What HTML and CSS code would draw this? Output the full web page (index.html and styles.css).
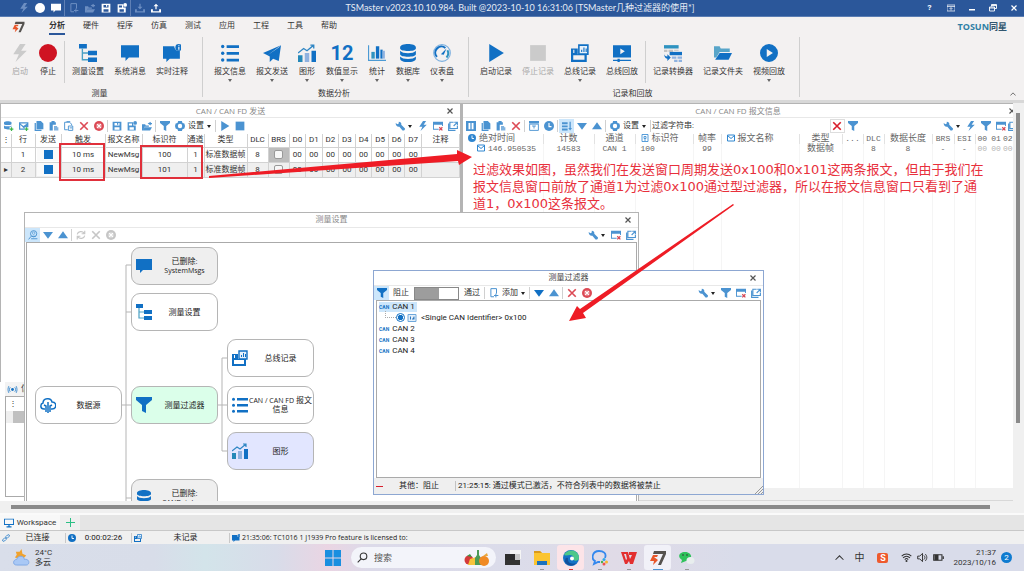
FILE: index.html
```html
<!DOCTYPE html>
<html lang="zh-CN">
<head>
  <meta charset="UTF-8">
  <meta name="viewport" content="width=device-width, initial-scale=1.0">
  <title>TSMaster</title>
  <link rel="stylesheet" href="styles.css">
</head>
<body>
  <!-- icon sprite -->
  <svg class="sprite" xmlns="http://www.w3.org/2000/svg">
    <symbol id="bolt" viewBox="0 0 16 16"><path d="M8 0L2 9h5l-3 7 10-10H9l4-6z"/></symbol>
    <symbol id="dot" viewBox="0 0 16 16"><circle cx="8" cy="8" r="8"/></symbol>
    <symbol id="chat" viewBox="0 0 16 16"><path d="M0 1h16v11H7l-3 3v-3H0z"/></symbol>
    <symbol id="chat-info" viewBox="0 0 16 16"><path d="M0 2h10a4 4 0 0 0 5 4v7H6l-3 3v-3H0z"/><circle cx="14" cy="3" r="3"/><path d="M13.600 2.600h1v2.400h-1zM13.600 1h1v1h-1z" fill="#fff"/></symbol>
    <symbol id="doc-add" viewBox="0 0 16 16"><path d="M3 1h9v8M3 1v13h5M11 9v6M8 12h7" fill="none" stroke="currentColor" stroke-width="1.600"/></symbol>
    <symbol id="folder-up" viewBox="0 0 16 16"><path d="M0 5h5l1 2h5v2H4l-2 6H0zM4 10h12l-3 5H2zM9 4l5-3v2h2v2h-2v2z"/></symbol>
    <symbol id="save" viewBox="0 0 16 16"><path fill-rule="evenodd" d="M1 1h14v14H1zM4 3v4h8V3zM4 10v4h8v-4zM8 3h2v3H8z"/></symbol>
    <symbol id="save-as" viewBox="0 0 16 16"><path fill-rule="evenodd" d="M1 2h9v5h4v8H1zM3 4v3h5V4zM4 10v4h7v-4z"/><circle cx="13" cy="3" r="3"/></symbol>
    <symbol id="download" viewBox="0 0 16 16"><path d="M7 1h2v5h3L8 10 4 6h3zM0 10h3v3h10v-3h3v5H0z"/></symbol>
    <symbol id="upload" viewBox="0 0 16 16"><path d="M7 10h2V5h3L8 1 4 5h3zM0 10h3v3h10v-3h3v5H0z"/></symbol>
    <symbol id="tree" viewBox="0 0 16 16"><path d="M0 0h7v4H0zM8 6h8v4H8zM8 12h8v4H8z"/><path d="M3 4v10h5M3 8h5" fill="none" stroke="#49a0c4" stroke-width="1.200"/></symbol>
    <symbol id="list" viewBox="0 0 16 16"><path d="M5 1h11v2.500H5zM5 7h11v2.500H5zM5 13h11v2.500H5z"/><circle cx="1.500" cy="2.200" r="1.500"/><circle cx="1.500" cy="8.200" r="1.500"/><circle cx="1.500" cy="14.200" r="1.500"/></symbol>
    <symbol id="plane" viewBox="0 0 16 16"><path d="M16 1L0 8l4 2zM16 1L6 11v5l3-3 5 2zM14 3L4 10l2 1z"/></symbol>
    <symbol id="chart" viewBox="0 0 16 16"><path d="M0 10h4v6H0z" fill="#2488b8"/><path d="M6 8h4v8H6z" fill="#8fb2e0"/><path d="M12 6h4v10h-4z"/><path d="M0 8l5-4 3 2 6-5M11 1h3v3" fill="none" stroke="#2f86c4" stroke-width="1.200"/></symbol>
    <symbol id="bars" viewBox="0 0 16 16"><path d="M0 1h1v13h15v1H0z" fill="#4b9ad4"/><path d="M3 7h3v6H3z" fill="#2f93c0"/><path d="M7 2h3v11H7z"/><path d="M11 5h2v8h-2z"/><path d="M13 6h2v7h-2z" fill="#8fb2e0"/></symbol>
    <symbol id="db" viewBox="0 0 16 16"><path d="M1 3c0-4 14-4 14 0v1c0 3-14 3-14 0zM1 6c2 3 12 3 14 0v3c0 3-14 3-14 0zM1 11c2 3 12 3 14 0v2c0 4-14 4-14 0z"/></symbol>
    <symbol id="gauge" viewBox="0 0 16 16"><circle cx="8" cy="8" r="7.400" fill="none" stroke="#7db0df"/><path d="M3.500 11.500A5.500 5.500 0 0 1 11 3.500" fill="none" stroke="currentColor" stroke-width="1.800"/><path d="M12.800 5.600A5.500 5.500 0 0 1 12 12" fill="none" stroke="#2f93c0" stroke-width="1.800"/><path d="M12 4L9.500 9.500 7 9z"/></symbol>
    <symbol id="play" viewBox="0 0 16 16"><path d="M2 0l13 8-13 8z"/></symbol>
    <symbol id="stop" viewBox="0 0 16 16"><path d="M1 1h14v14H1z"/></symbol>
    <symbol id="bus-log" viewBox="0 0 16 16"><path fill-rule="evenodd" d="M0 4h6v5h8v7H0zM2 10v4h10v-4zM2 5v3h1V5z"/><path d="M7 1h8v8H7z" fill="#e8f2fb" stroke="currentColor" stroke-width="1.400"/><path d="M9 5h1v2H9zM11 3h1v4h-1zM13 4h1v3h-1z"/></symbol>
    <symbol id="screen" viewBox="0 0 16 16"><path fill-rule="evenodd" d="M0 1h16v11H0zM6.500 4v5l4-2.500z"/><path d="M0 14h16v1H0zM4 13h2v3H4z"/></symbol>
    <symbol id="convert" viewBox="0 0 16 16"><path d="M0 1h13v3H0z" fill="#2f93c0"/><path d="M0 5h3v2H0zM4 5h4v2H4zM9 5h4v1H9z" fill="#c3c3c3"/><path d="M5 7h11v3H5z"/><path d="M7 11h4v2H7zM12 11h4v2h-4zM9 14h3v2H9zM13 14h3v2h-3z" fill="#8fb2e0"/><path d="M0 8c0 2 1 3 3 3V9l3 3-3 3v-2C1 13 0 11 0 8z"/></symbol>
    <symbol id="folder" viewBox="0 0 16 16"><path d="M0 2h5l1 2h8v3H5l-3 5H0z" fill="#58a5c9"/><path d="M5 8h11l-3 6H1z"/></symbol>
    <symbol id="play-circle" viewBox="0 0 16 16"><path fill-rule="evenodd" d="M8 0a8 8 0 1 1 0 16A8 8 0 0 1 8 0zM6 4.500v7l5.500-3.500z"/></symbol>
    <symbol id="db-add" viewBox="0 0 16 16"><path d="M0 2c3-2 9-2 12 0v3c-3 2-9 2-12 0zM0 7c3 2 9 2 12 0v2H9v4c-3 1-7 0-9-1z"/><path d="M11 10h2v2h2v2h-2v2h-2v-2H9v-2h2z" fill="#3db54a"/></symbol>
    <symbol id="mail-add" viewBox="0 0 16 16"><path fill-rule="evenodd" d="M0 2h15v8H9v4H0zM2 4l5 4 6-4zM2 6v6h6z"/><path d="M11 10h2v2h2v2h-2v2h-2v-2H9v-2h2z" fill="#3db54a"/></symbol>
    <symbol id="copy" viewBox="0 0 16 16"><path d="M4 0h7l4 4v9H4zM1 3h2v11h9v2H1z"/></symbol>
    <symbol id="paste" viewBox="0 0 16 16"><path d="M1 2h3V0h5v2h2v4H6v9H1z"/><path d="M8 8h5v2h2v5H8z" opacity=".7"/></symbol>
    <symbol id="doc-lines" viewBox="0 0 16 16"><path d="M1 2h8l3 3v2M1 2v12h5M4 1h6M7 8h7v7H7zM9 11h4" fill="none" stroke="currentColor" stroke-width="1.500"/></symbol>
    <symbol id="cross" viewBox="0 0 16 16"><path d="M2 2l12 12M14 2L2 14" fill="none" stroke="currentColor" stroke-width="2.600"/></symbol>
    <symbol id="cross-circle" viewBox="0 0 16 16"><circle cx="8" cy="8" r="8"/><circle cx="8" cy="8" r="4.500" fill="#fff" opacity=".35"/><path d="M5 5l6 6M11 5l-6 6" stroke="#fff" stroke-width="2"/></symbol>
    <symbol id="funnel" viewBox="0 0 16 16"><path d="M0 0h16v3L10 8v8l-4-2V8L0 3z"/></symbol>
    <symbol id="gear" viewBox="0 0 16 16"><path fill-rule="evenodd" d="M5 0h6l1 3 3 1 1 4-1 4-3 1-1 3H5l-1-3-3-1-1-4 1-4 3-1zM8 4.500a3.500 3.500 0 1 0 0 7 3.500 3.500 0 0 0 0-7z"/></symbol>
    <symbol id="wrench" viewBox="0 0 16 16"><path d="M1 3l3 2 2-1V1c3 0 5 3 4 5l6 6c0 3-2 4-4 3L7 9C4 10 1 7 1 3z"/></symbol>
    <symbol id="window-x" viewBox="0 0 16 16"><path fill-rule="evenodd" d="M0 1h16v13H0zM1.500 6v6.500h13V6z"/><path d="M9 8h7v8H9z" fill="#fff"/><path d="M10 10l5 5M15 10l-5 5" stroke="#d64553" stroke-width="2"/></symbol>
    <symbol id="pop-out" viewBox="0 0 16 16"><path d="M9 2H3v10h12V8M1 4v11h11M9 8l5-5M10 2h5v5" fill="none" stroke="currentColor" stroke-width="1.800"/></symbol>
    <symbol id="pause" viewBox="0 0 16 16"><path fill-rule="evenodd" d="M0 0h16v16H0zM4 3v10h3V3zM9 3v10h3V3z"/></symbol>
    <symbol id="panel" viewBox="0 0 16 16"><path d="M0 0h16v4H0z"/><path d="M1 5h14v10H1zM5 8h6M8 8v4" fill="none" stroke="currentColor" stroke-width="1.500"/></symbol>
    <symbol id="clock" viewBox="0 0 16 16"><circle cx="8" cy="8" r="8"/><path d="M8 3v6h4" fill="none" stroke="#fff" stroke-width="1.800"/></symbol>
    <symbol id="sort" viewBox="0 0 16 16"><path d="M0 2h9v3H0zM0 7h9v3H0zM0 12h9v3H0zM12 1h2v10h2l-3 4-3-4h2z"/></symbol>
    <symbol id="down" viewBox="0 0 16 16"><path d="M0 3h16L8 14z"/></symbol>
    <symbol id="up" viewBox="0 0 16 16"><path d="M0 13h16L8 2z"/></symbol>
    <symbol id="mail" viewBox="0 0 16 16"><path d="M1 2h14v12H1zM1 3l7 6 7-6" fill="none" stroke="currentColor" stroke-width="2"/></symbol>
    <symbol id="tag" viewBox="0 0 16 16"><path d="M2 1h12v14H2zM6 5h4v4H6zM6 12h4" fill="none" stroke="currentColor" stroke-width="1.600"/></symbol>
    <symbol id="refresh" viewBox="0 0 16 16"><path d="M2 7c1-5 8-6 11-2M14 1v5H9M14 9c-1 5-8 6-11 2M2 15v-5h5" fill="none" stroke="currentColor" stroke-width="1.800"/></symbol>
    <symbol id="zoom-fit" viewBox="0 0 16 16"><circle cx="9" cy="6" r="5" fill="none" stroke="currentColor" stroke-width="1.500"/><circle cx="9" cy="5" r="2" fill="none" stroke="currentColor"/><path d="M5 10l-4 5M6 10h6M5 14h10" stroke="currentColor" stroke-width="1.500"/></symbol>
    <symbol id="cloud" viewBox="0 0 16 16"><path d="M5 12H4C0 12 0 7 3 6c0-5 8-6 9-1 5 0 5 7 0 7h-1M8 5v11M6 15V9L4 8M10 15V9l2-1" fill="none" stroke="currentColor" stroke-width="1.500"/></symbol>
    <symbol id="signal" viewBox="0 0 16 16"><circle cx="8" cy="8" r="2.500"/><path d="M4 4c-2 2-2 6 0 8M12 4c2 2 2 6 0 8M1.500 2c-2 4-2 8 0 12M14.500 2c2 4 2 8 0 12" fill="none" stroke="currentColor" stroke-width="1.300"/></symbol>
    <symbol id="monitor" viewBox="0 0 16 16"><path fill-rule="evenodd" d="M0 1h16v10H0zM1.500 2.500v7h13v-7zM7 11h2v2h3v2H4v-2h3z"/></symbol>
    <symbol id="link" viewBox="0 0 16 16"><path d="M8 5l3-3c3-2 5 1 3 3l-4 4c-1 1-3 1-3-1M8 11l-3 3c-3 2-5-1-3-3l4-4c1-1 3-1 3 1" fill="none" stroke="currentColor" stroke-width="1.600"/></symbol>
    <symbol id="close" viewBox="0 0 16 16"><path d="M3 3l10 10M13 3L3 13" fill="none" stroke="currentColor" stroke-width="2.400"/></symbol>
    <symbol id="restore" viewBox="0 0 16 16"><path d="M5 5V1h10v8h-4M1 6h10v8H1zM1 8h10M5 3h10" fill="none" stroke="currentColor" stroke-width="1.800"/></symbol>
    <symbol id="minimize" viewBox="0 0 16 16"><path d="M2 10h12v3H2z"/></symbol>
    <symbol id="layout" viewBox="0 0 16 16"><path d="M0 2h16v12H0zM0 5h16M5 10l3-3 3 3M8 8v5" fill="none" stroke="currentColor" stroke-width="1.400"/></symbol>
    <symbol id="chevron" viewBox="0 0 16 16"><path d="M1 12l7-7 7 7" fill="none" stroke="currentColor" stroke-width="1.800"/></symbol>
    <symbol id="app" viewBox="0 0 16 16"><path d="M4 1h12v3l-5 11H8l5-11H3z" fill="#55524f"/><path d="M3 5h5L7 7H4l4 3-5 5 1-4H0z" fill="#e8562a"/></symbol>
    <symbol id="id-tag" viewBox="0 0 16 16"><path d="M0 1h16v14H0z" fill="#e3effa" stroke="#6fa8dc" stroke-width="2"/><path d="M4 5h2v6H4zM8 9h2V7h1V5h2v6H8z" fill="#2f78bd"/></symbol>
  </svg>

  <header class="titlebar">
    <div class="quick">
      <button class="quick-btn dim" aria-label="启动"><svg><use href="#bolt"/></svg></button>
      <button class="quick-btn" aria-label="停止"><svg><use href="#dot"/></svg></button>
      <button class="quick-btn" aria-label="消息"><svg><use href="#chat"/></svg></button>
      <i></i>
      <button class="quick-btn dim" aria-label="新建"><svg><use href="#doc-add"/></svg></button>
      <button class="quick-btn dim" aria-label="打开"><svg><use href="#folder-up"/></svg></button>
      <button class="quick-btn" aria-label="保存"><svg><use href="#save"/></svg></button>
      <button class="quick-btn" aria-label="另存为"><svg><use href="#save-as"/></svg></button>
      <i></i>
      <button class="quick-btn dim" aria-label="导入"><svg><use href="#download"/></svg></button>
      <button class="quick-btn" aria-label="导出"><svg><use href="#upload"/></svg></button>
    </div>
    <div class="app-title">TSMaster v2023.10.10.984. Built @2023-10-10 16:31:06 [TSMaster几种过滤器的使用*]</div>
    <div class="win-btns">
      <button class="help">?</button>
      <button aria-label="布局"><svg><use href="#layout"/></svg></button>
      <button aria-label="最小化"><svg><use href="#minimize"/></svg></button>
      <button aria-label="还原"><svg><use href="#restore"/></svg></button>
      <button aria-label="关闭"><svg><use href="#close"/></svg></button>
    </div>
  </header>

  <nav class="tabs">
    <svg class="app-logo"><use href="#app"/></svg>
    <a class="active" href="#">分析</a>
    <a href="#">硬件</a>
    <a href="#">程序</a>
    <a href="#">仿真</a>
    <a href="#">测试</a>
    <a href="#">应用</a>
    <a href="#">工程</a>
    <a href="#">工具</a>
    <a href="#">帮助</a>
    <div class="brand">TOSUN<span>同星</span></div>
  </nav>

  <section class="ribbon">
    <div class="group">
      <div class="group-btns">
        <button class="big off"><svg><use href="#bolt"/></svg>启动</button>
        <button class="big red"><svg><use href="#dot"/></svg>停止</button>
        <i></i>
        <button class="big"><svg><use href="#tree"/></svg>测量设置</button>
        <button class="big"><svg><use href="#chat"/></svg>系统消息</button>
        <button class="big"><svg><use href="#chat-info"/></svg>实时注释</button>
      </div>
      <div class="group-name">测量</div>
    </div>
    <div class="group">
      <div class="group-btns">
        <button class="big drop"><svg><use href="#list"/></svg>报文信息</button>
        <button class="big drop"><svg><use href="#plane"/></svg>报文发送</button>
        <button class="big drop"><svg><use href="#chart"/></svg>图形</button>
        <button class="big drop"><b>12</b>数值显示</button>
        <button class="big drop"><svg><use href="#bars"/></svg>统计</button>
        <button class="big drop"><svg><use href="#db"/></svg>数据库</button>
        <button class="big drop"><svg><use href="#gauge"/></svg>仪表盘</button>
      </div>
      <div class="group-name">数据分析</div>
    </div>
    <div class="group">
      <div class="group-btns">
        <button class="big"><svg><use href="#play"/></svg>启动记录</button>
        <button class="big off"><svg><use href="#stop"/></svg>停止记录</button>
        <button class="big drop"><svg><use href="#bus-log"/></svg>总线记录</button>
        <button class="big"><svg><use href="#screen"/></svg>总线回放</button>
        <i></i>
        <button class="big"><svg><use href="#convert"/></svg>记录转换器</button>
        <button class="big"><svg><use href="#folder"/></svg>记录文件夹</button>
        <button class="big drop"><svg><use href="#play-circle"/></svg>视频回放</button>
      </div>
      <div class="group-name">记录和回放</div>
    </div>
    <button class="collapse" aria-label="折叠"><svg><use href="#chevron"/></svg></button>
  </section>

  <main class="workspace">
    <div class="left">
      <section class="pane send">
        <div class="pane-title">CAN / CAN FD 发送<button class="close" aria-label="关闭"><svg><use href="#close"/></svg></button></div>
        <div class="toolbar">
          <button class="tool" aria-label="添加数据库"><svg><use href="#db-add"/></svg></button>
          <button class="tool" aria-label="添加报文"><svg><use href="#mail-add"/></svg></button>
          <button class="tool" aria-label="复制"><svg><use href="#copy"/></svg></button>
          <button class="tool" aria-label="粘贴"><svg><use href="#paste"/></svg></button>
          <button class="tool" aria-label="剪切"><svg><use href="#doc-lines"/></svg></button>
          <button class="tool danger" aria-label="删除"><svg><use href="#cross"/></svg></button>
          <button class="tool danger" aria-label="清空"><svg><use href="#cross-circle"/></svg></button>
          <i></i>
          <button class="tool" aria-label="保存"><svg><use href="#save"/></svg></button>
          <button class="tool" aria-label="另存为"><svg><use href="#save-as"/></svg></button>
          <button class="tool" aria-label="打开"><svg><use href="#folder-up"/></svg></button>
          <i></i>
          <button class="tool" aria-label="过滤"><svg><use href="#funnel"/></svg></button>
          <button class="tool wide caret"><svg><use href="#gear"/></svg>设置</button>
          <i></i>
          <button class="tool" aria-label="启动"><svg><use href="#play"/></svg></button>
          <button class="tool" aria-label="停止"><svg><use href="#stop"/></svg></button>
          <span class="space"></span>
          <button class="tool wide caret" aria-label="工具"><svg><use href="#wrench"/></svg></button>
          <button class="tool" aria-label="快捷"><svg><use href="#bolt"/></svg></button>
          <button class="tool" aria-label="关闭窗口"><svg><use href="#window-x"/></svg></button>
          <button class="tool" aria-label="弹出"><svg><use href="#pop-out"/></svg></button>
        </div>
        <table class="send-table">
          <colgroup>
            <col class="w-mark"><col class="w-row"><col class="w-send"><col class="w-trig"><col class="w-name"><col class="w-id"><col class="w-chn"><col class="w-type"><col class="w-dlc"><col class="w-brs">
            <col span="8"><col class="w-note">
          </colgroup>
          <tr><th>⋮</th><th>行</th><th>发送</th><th>触发</th><th>报文名称</th><th>标识符</th><th>通道</th><th>类型</th><th>DLC</th><th>BRS</th><th>D0</th><th>D1</th><th>D2</th><th>D3</th><th>D4</th><th>D5</th><th>D6</th><th>D7</th><th>注释</th></tr>
          <tr><td></td><td>1</td><td><button class="send-btn" aria-label="发送"></button></td><td>10 ms</td><td>NewMsg</td><td>100</td><td>1</td><td>标准数据帧</td><td>8</td><td class="sel"><input type="checkbox" aria-label="BRS 1"></td><td>00</td><td>00</td><td>00</td><td>00</td><td>00</td><td>00</td><td>00</td><td>00</td><td></td></tr>
          <tr class="alt"><td>▸</td><td>2</td><td><button class="send-btn" aria-label="发送"></button></td><td>10 ms</td><td>NewMsg</td><td>101</td><td>1</td><td>标准数据帧</td><td>8</td><td><input type="checkbox" aria-label="BRS 2"></td><td>00</td><td>00</td><td>00</td><td>00</td><td>00</td><td>00</td><td>00</td><td>00</td><td></td></tr>
        </table>
      </section>
      <section class="signal">
        <div class="signal-head"><svg><use href="#signal"/></svg>信号</div>
        <div class="signal-box">
          <div class="signal-row"><span>⋮</span><span>行</span></div>
          <div class="signal-sel"></div>
        </div>
      </section>
    </div>

    <section class="pane trace">
      <div class="pane-title">CAN / CAN FD 报文信息<button class="close" aria-label="关闭"><svg><use href="#close"/></svg></button></div>
      <div class="toolbar">
        <button class="tool" aria-label="暂停"><svg><use href="#pause"/></svg></button>
        <button class="tool" aria-label="复制"><svg><use href="#copy"/></svg></button>
        <button class="tool" aria-label="粘贴"><svg><use href="#paste"/></svg></button>
        <button class="tool danger" aria-label="清空"><svg><use href="#cross"/></svg></button>
        <i></i>
        <button class="tool" aria-label="面板"><svg><use href="#panel"/></svg></button>
        <button class="tool" aria-label="时间"><svg><use href="#clock"/></svg></button>
        <i></i>
        <button class="tool on" aria-label="排序"><svg><use href="#sort"/></svg></button>
        <button class="tool" aria-label="向下"><svg><use href="#down"/></svg></button>
        <button class="tool" aria-label="向上"><svg><use href="#up"/></svg></button>
        <i></i>
        <button class="tool wide caret"><svg><use href="#gear"/></svg>设置</button>
        <i></i>
        <label for="filter">过滤字符串:</label>
        <input id="filter" class="filter-input" type="text">
        <button class="tool danger clear" aria-label="清除"><svg><use href="#cross"/></svg></button>
        <button class="tool" aria-label="过滤"><svg><use href="#funnel"/></svg></button>
        <span class="space"></span>
        <button class="tool wide caret" aria-label="工具"><svg><use href="#wrench"/></svg></button>
        <button class="tool" aria-label="快捷"><svg><use href="#bolt"/></svg></button>
        <button class="tool" aria-label="过滤器"><svg><use href="#funnel"/></svg></button>
        <button class="tool" aria-label="关闭窗口"><svg><use href="#window-x"/></svg></button>
        <button class="tool cut" aria-label="弹出"><svg><use href="#pop-out"/></svg></button>
      </div>
      <table class="trace-table">
        <colgroup>
          <col class="t-time"><col class="t-count"><col class="t-chn"><col class="t-id"><col class="t-rate"><col class="t-name"><col class="t-type"><col class="t-dots"><col class="t-dlc"><col class="t-len"><col class="t-brs"><col class="t-esi"><col class="t-byte"><col class="t-byte"><col>
        </colgroup>
        <tr>
          <th class="lead cjk"><svg class="deep"><use href="#clock"/></svg>绝对时间</th><th class="cjk">计数</th><th class="cjk">通道</th><th class="lead cjk"><svg><use href="#tag"/></svg>标识符</th><th class="cjk">帧率</th><th class="lead cjk"><svg><use href="#mail"/></svg>报文名称</th><th class="cjk">类型</th><th>...</th><th>DLC</th><th class="cjk">数据长度</th><th>BRS</th><th>ESI</th><th class="byte">00</th><th class="byte">01</th><th class="byte">02</th>
        </tr>
        <tr>
          <td class="stamp"><svg><use href="#mail"/></svg>146.950535</td><td>14583</td><td>CAN 1</td><td class="lead">100</td><td>99</td><td></td><td class="cjk">数据帧</td><td></td><td>8</td><td>8</td><td>-</td><td>-</td><td class="byte">00</td><td class="byte">00</td><td class="byte">00</td>
        </tr>
        <tr class="rest"><td></td><td></td><td></td><td></td><td></td><td></td><td></td><td></td><td></td><td></td><td></td><td></td><td class="byte"></td><td class="byte"></td><td class="byte"></td></tr>
      </table>
    </section>

    <div class="vscroll"><div></div></div>

    <!-- measurement setup window -->
    <section class="window setup">
      <div class="pane-title">测量设置<button class="close" aria-label="关闭"><svg><use href="#close"/></svg></button></div>
      <div class="toolbar">
        <button class="tool on" aria-label="缩放"><svg><use href="#zoom-fit"/></svg></button>
        <button class="tool" aria-label="向下"><svg><use href="#down"/></svg></button>
        <button class="tool" aria-label="向上"><svg><use href="#up"/></svg></button>
        <i></i>
        <button class="tool off" aria-label="刷新"><svg><use href="#refresh"/></svg></button>
        <button class="tool off" aria-label="删除"><svg><use href="#cross"/></svg></button>
        <button class="tool off" aria-label="清空"><svg><use href="#cross-circle"/></svg></button>
        <span class="space"></span>
        <button class="tool wide caret" aria-label="工具"><svg><use href="#wrench"/></svg></button>
        <button class="tool" aria-label="关闭窗口"><svg><use href="#window-x"/></svg></button>
        <button class="tool" aria-label="弹出"><svg><use href="#pop-out"/></svg></button>
      </div>
      <div class="canvas">
        <svg class="wires" width="400" height="280"><path d="M99 22v258M99 22h5M99 69h5M95 162h9M99 255h5M195 115v93M195 115h5M191 162h9M195 208h5"/></svg>
        <div class="node n-source"><svg><use href="#cloud"/></svg><span>数据源</span></div>
        <div class="node gone n-msgs"><svg><use href="#chat"/></svg><span>已删除:<br><small>SystemMsgs</small></span></div>
        <div class="node n-setup"><svg><use href="#tree"/></svg><span>测量设置</span></div>
        <div class="node green n-filter"><svg><use href="#funnel"/></svg><span>测量过滤器</span></div>
        <div class="node gone n-db"><svg><use href="#db"/></svg><span>已删除:<br><small>CANDatabase</small></span></div>
        <div class="node n-log"><svg><use href="#bus-log"/></svg><span>总线记录</span></div>
        <div class="node n-trace"><svg><use href="#list"/></svg><span><small>CAN / CAN FD</small> 报文<br>信息</span></div>
        <div class="node blue n-chart"><svg><use href="#chart"/></svg><span>图形</span></div>
      </div>
    </section>

    <!-- measurement filter window -->
    <section class="window filter">
      <div class="pane-title">测量过滤器<button class="close" aria-label="关闭"><svg><use href="#close"/></svg></button></div>
      <div class="toolbar">
        <button class="tool on deep" aria-label="过滤"><svg><use href="#funnel"/></svg></button>
        <label for="mode" class="mode-off">阻止</label>
        <input id="mode" class="switch" type="checkbox" checked>
        <label for="mode" class="mode-on">通过</label>
        <i></i>
        <button class="tool wide caret"><svg><use href="#doc-add"/></svg>添加</button>
        <i></i>
        <button class="tool deep" aria-label="向下"><svg><use href="#down"/></svg></button>
        <button class="tool" aria-label="向上"><svg><use href="#up"/></svg></button>
        <i></i>
        <button class="tool danger" aria-label="删除"><svg><use href="#cross"/></svg></button>
        <button class="tool danger" aria-label="清空"><svg><use href="#cross-circle"/></svg></button>
        <span class="space"></span>
        <button class="tool wide caret" aria-label="工具"><svg><use href="#wrench"/></svg></button>
        <button class="tool" aria-label="过滤器"><svg><use href="#funnel"/></svg></button>
        <button class="tool" aria-label="关闭窗口"><svg><use href="#window-x"/></svg></button>
        <button class="tool" aria-label="弹出"><svg><use href="#pop-out"/></svg></button>
      </div>
      <ul class="channels">
        <li><span class="chn picked"><b>CAN</b>CAN 1</span></li>
        <li class="child"><input type="radio" checked aria-label="0x100"><svg><use href="#id-tag"/></svg>&lt;Single CAN Identifier&gt; 0x100</li>
        <li><span class="chn"><b>CAN</b>CAN 2</span></li>
        <li><span class="chn"><b>CAN</b>CAN 3</span></li>
        <li><span class="chn"><b>CAN</b>CAN 4</span></li>
      </ul>
      <div class="filter-status">
        <div class="other"><em></em><span>其他：阻止</span></div>
        <div class="msg">21:25:15: 通过模式已激活，不符合列表中的数据将被禁止</div>
        <svg class="grip" viewBox="0 0 8 8"><path d="M0 8L8 0M3 8l5-5M6 8l2-2"/></svg>
      </div>
    </section>

    <!-- annotations -->
    <div class="mark mark-trigger"></div>
    <div class="mark mark-id"></div>
    <p class="remark">过滤效果如图，虽然我们在发送窗口周期发送0x100和0x101这两条报文，但由于我们在<br>报文信息窗口前放了通道1为过滤0x100通过型过滤器，所以在报文信息窗口只看到了通<br>道1，0x100这条报文。</p>
    <svg class="arrows" width="760" height="240">
      <path d="M209 76L457 54 457 50 472 57 459 65 458 61 209 78z"/>
      <path d="M733 104L734 105 583 213 586 218 569 221 577 206 580 209z"/>
    </svg>
  </main>

  <div class="hscroll"><div></div></div>

  <div class="sheets">
    <button class="sheet"><svg><use href="#monitor"/></svg>Workspace</button>
    <button class="add" aria-label="新建工作区"></button>
  </div>

  <div class="statusbar">
    <div class="st-link"><svg><use href="#link"/></svg><span>已连接</span></div>
    <div class="st-time"><svg><use href="#clock"/></svg><span>0:00:02:26</span></div>
    <div class="st-log"><svg><use href="#bus-log"/></svg><span>未记录</span></div>
    <div class="st-msg"><svg><use href="#chat-info"/></svg><small>21:35:06: TC1016 1 J1939 Pro feature is licensed to:</small></div>
  </div>

  <footer class="taskbar">
    <div class="weather">
      <svg viewBox="0 0 18 18"><path d="M2 9l2-3-1-3 4 0 2-3 1 5 4 2-4 4z" fill="#f0a22e"/><path d="M4 17c-5 0-4-6 0-6 1-5 8-4 8 0 6-1 6 6 2 6z" fill="#a9c8f5" stroke="#7ea8e6"/></svg>
      <div>24°C<br>多云</div>
    </div>
    <div class="dock">
      <button class="start" aria-label="开始"><svg viewBox="0 0 16 16"><path d="M0 0h7.500v7.500H0zM8.500 0H16v7.500H8.500zM0 8.500h7.500V16H0zM8.500 8.500H16V16H8.500z"/></svg></button>
      <div class="search">
        <svg viewBox="0 0 16 16"><path d="M6 10l-5 5M9.500 1.500a4.800 4.800 0 1 1 0 9.600 4.800 4.800 0 0 1 0-9.600z" fill="none" stroke="#333" stroke-width="1.600"/></svg>
        <input type="text" placeholder="搜索" aria-label="搜索">
        <svg class="food" viewBox="0 0 26 16"><circle cx="5" cy="10" r="4.500" fill="#d43a3a"/><path d="M3 6l3-2 2 3z" fill="#3a9444"/><path d="M4 15l2-6 6-2 3 8z" fill="#f6c33c"/><path d="M13 0h2v5l2 3v7h-6V8l2-3z" fill="#4c9a55"/><circle cx="20" cy="11" r="5" fill="#f08a24"/><path d="M19 6l4-3 1 3z" fill="#e9a63b"/></svg>
      </div>
      <button class="task" aria-label="任务视图"><svg viewBox="0 0 16 16"><path d="M5 0h11v9H5z" fill="#f5f5f5"/><path d="M0 4h10v6H0z" fill="#2c2c2c"/><path d="M0 10h15v5H0z" fill="#333"/><path d="M10 4h5v6h-5z" fill="#c8c8c8"/></svg></button>
      <button class="task run" aria-label="文件"><svg viewBox="0 0 16 16"><path d="M0 1h6l2 2h8v12H0z" fill="#fbc42f"/><path d="M0 1h6l2 2H0z" fill="#d99a1c"/><path d="M3 11h10v4H3z" fill="#1b72bd"/></svg></button>
      <button class="task run edge" aria-label="浏览器"><svg viewBox="0 0 16 16"><circle cx="8" cy="8" r="8" fill="#1673c6"/><path d="M1 5C4-2 16-1 16 8c0 3-5 4-6 1 1-3-1-4-3-4S3 6 1 5z" fill="#4cc78a"/><path d="M5 8c-1 4 3 7 8 5-3 4-9 3-11-1 0-4 1-5 3-4z" fill="#14509c"/><circle cx="9" cy="8.500" r="2" fill="#fff"/></svg></button>
      <button class="task run" aria-label="企业聊天"><svg viewBox="0 0 16 16"><path d="M13 8C15 3 11 1 7 1 0 1-1 9 3 11l-1 3 4-2h2" fill="none" stroke="#3388ee" stroke-width="1.800"/><circle cx="12" cy="9.500" r="1.500" fill="#2fa8e8"/><circle cx="14.500" cy="12" r="1.500" fill="#f7b52c"/><circle cx="12" cy="14" r="1.500" fill="#ef5350"/><circle cx="10" cy="12" r="1.200" fill="#47b34b"/></svg></button>
      <button class="task run" aria-label="办公"><svg viewBox="0 0 16 16"><path d="M0 2h7l2 7 2-4H8V2h8l-4 12H9l-1-3-2 3H4zM3 4l2 6 1-1-1-5z" fill="#e32f2f"/></svg></button>
      <button class="task front" aria-label="TSMaster"><svg><use href="#app"/></svg></button>
      <button class="task run" aria-label="微信"><svg viewBox="0 0 16 16"><path d="M6 2c8 0 8 9 1 9L2 13l1-3C-2 7 0 2 6 2z" fill="#2fc25b"/><ellipse cx="11.500" cy="10.500" rx="4" ry="3.500" fill="#e8eeee"/><circle cx="4" cy="5" r=".8"/><circle cx="8" cy="5" r=".8"/></svg></button>
    </div>
    <div class="tray">
      <svg class="tray-up"><use href="#chevron"/></svg>
      <span class="ime">中</span>
      <span class="sogou">S</span>
      <svg class="wifi" viewBox="0 0 16 16"><path d="M1 6c4-4 10-4 14 0M3 8.500c3-3 7-3 10 0M5.500 11c2-2 3-2 5 0" fill="none" stroke="currentColor" stroke-width="1.500"/><circle cx="8" cy="13" r="1.500"/></svg>
      <svg class="sound" viewBox="0 0 16 16"><path d="M1 6h3l4-4v12l-4-4H1zM10 5c2 2 2 4 0 6M12 3c3 3 3 7 0 10" fill="none" stroke="currentColor" stroke-width="1.400"/></svg>
      <svg class="battery" viewBox="0 0 16 16"><path d="M1 4h12v8H1zM15 6v4" fill="none" stroke="currentColor" stroke-width="1.600"/><path d="M2 4h6v8H2z"/></svg>
      <div class="date">21:37<br>2023/10/16</div>
      <span class="badge">2</span>
    </div>
  </footer>
</body>
</html>
```
FILE: styles.css
```css
* {
  box-sizing: border-box;
}

body {
  margin: 0;
  height: 100vh;
  display: flex;
  flex-direction: column;
  overflow: hidden;
  background-color: #f3f1f1;
  color: #333;
  font-family: Roboto, "Noto Sans CJK SC", sans-serif;
  font-size: 8px;
  line-height: 10px;
}

button {
  margin: 0;
  padding: 0;
  border: none;
  background: none;
  color: inherit;
  font: inherit;
}

input {
  margin: 0;
  font: inherit;
}

small {
  font-family: "Open Sans", sans-serif;
  font-size: 7px;
}

svg {
  fill: currentColor;
  flex: none;
}

.sprite {
  position: absolute;
  width: 0;
  height: 0;
}

/* title bar */
.titlebar {
  flex: none;
  height: 17px;
  display: flex;
  align-items: center;
  background-color: #2b579a;
  border-bottom: 1px solid #5a7db3;
  color: #fff;
}

.quick,
.win-btns {
  flex: 1;
  display: flex;
  align-items: center;
}

.quick {
  padding-left: 16px;
}

.quick i {
  width: 1px;
  height: 16px;
  margin-right: 1px;
  background-color: #5f80b5;
}

.quick-btn {
  width: 16px;
  display: flex;
  justify-content: center;
}

.quick-btn svg {
  width: 10px;
  height: 10px;
}

.quick-btn.dim {
  color: #6c8ec2;
}

.app-title {
  font-family: Lato, "Noto Sans CJK SC", sans-serif;
  font-size: 9px;
  color: #e6ecf5;
  white-space: nowrap;
}

.win-btns {
  justify-content: flex-end;
}

.win-btns button {
  width: 21px;
  height: 14px;
  display: flex;
  align-items: center;
  justify-content: center;
  font-weight: bold;
}

.win-btns svg {
  width: 8px;
  height: 8px;
}

/* ribbon tabs */
.tabs {
  flex: none;
  height: 20px;
  display: flex;
  align-items: center;
  padding: 0 17px 0 12px;
  gap: 18px;
}

.app-logo {
  width: 13px;
  height: 12px;
  margin-right: 6px;
}

.tabs a {
  height: 16px;
  line-height: 14px;
  color: #333;
  text-decoration: none;
  border-bottom: 2px solid transparent;
}

.tabs a.active {
  font-weight: bold;
  border-color: #2b579a;
}

.brand {
  margin-left: auto;
  font-family: "Open Sans", "Noto Sans CJK SC", sans-serif;
  font-size: 9px;
  font-weight: bold;
  color: #2f7fa5;
}

.brand span {
  color: #31566f;
}

/* ribbon */
.ribbon {
  flex: none;
  height: 63px;
  display: flex;
}

.group {
  height: 60px;
  display: flex;
  flex-direction: column;
  padding: 0 9px 0 6px;
  border-right: 1px solid #cfcfcf;
}

.group-btns {
  flex: 1;
  display: flex;
}

.group-btns i {
  width: 1px;
  height: 42px;
  margin: 4px 2px 0;
  background-color: #cfcfcf;
}

.big {
  min-width: 28px;
  padding: 7px 5px 0;
  display: flex;
  flex-direction: column;
  align-items: center;
  gap: 5px;
}

.big svg {
  width: 18px;
  height: 18px;
  color: #1170c4;
}

.big b {
  height: 18px;
  line-height: 18px;
  font-size: 20px;
  color: #1170c4;
}

.big.off {
  color: #a9a9a9;
}

.big.off svg {
  color: #cbcbcb;
}

.big.red svg {
  color: #cf1322;
}

.big.drop::after,
.caret::after {
  content: '';
  border: 2px solid transparent;
  border-top: 3px solid #666;
  border-bottom: none;
}

.big.drop::after {
  margin-top: -3px;
}

.group-name {
  height: 10px;
  margin-bottom: -2px;
  line-height: 10px;
  text-align: center;
}

.collapse {
  margin: 52px 8px 0 auto;
}

.collapse svg {
  width: 6px;
  height: 6px;
}

/* workspace */
.workspace {
  position: relative;
  flex: 1;
  min-height: 0;
  display: grid;
  grid-template-columns: 461fr 552fr 11px;
  padding-top: 3px;
  background-color: #d8d8d8;
  overflow: hidden;
}

.left {
  min-width: 0;
  display: flex;
  flex-direction: column;
  background-color: #fff;
}

.pane {
  min-width: 0;
  background-color: #fff;
  border: 1px solid #b4b4b4;
  border-bottom: none;
}

.send {
  height: 279px;
}

.pane-title {
  position: relative;
  height: 14px;
  line-height: 14px;
  text-align: center;
  color: #888;
  border-bottom: 1px solid #e8e8e8;
}

.pane > .pane-title {
  font-family: "Open Sans", "Noto Sans CJK SC", sans-serif;
}

.close {
  position: absolute;
  top: 3px;
  right: 6px;
  display: flex;
}

.close svg {
  width: 8px;
  height: 8px;
  color: #555;
}

.toolbar {
  height: 16px;
  display: flex;
  align-items: center;
  white-space: nowrap;
  overflow: hidden;
}

.toolbar i {
  width: 1px;
  height: 12px;
  margin: 0 1px;
  background-color: #d0d0d0;
}

.space {
  flex: 1;
}

.tool {
  flex: none;
  width: 15px;
  height: 14px;
  display: flex;
  align-items: center;
  justify-content: center;
  gap: 3px;
}

.tool svg {
  width: 10px;
  height: 10px;
  color: #4b93d1;
}

.tool.wide {
  width: auto;
  padding: 0 3px;
}

.tool.on {
  background-color: #cce6fb;
}

.tool.deep svg {
  color: #1170c4;
}

.tool.danger svg {
  color: #dc4a55;
}

.tool.off svg {
  color: #c6c6c6;
}

.tool.cut {
  width: 5px;
  justify-content: flex-start;
}

.caret::after {
  border-top-color: #222;
}

/* send table */
.send-table {
  width: 100%;
  table-layout: fixed;
  border-collapse: collapse;
  text-align: center;
  white-space: nowrap;
}

.send-table th,
.send-table td {
  height: 15px;
  padding: 0;
  font-weight: normal;
  border: 1px solid #d2d2d2;
  border-left: none;
  overflow: hidden;
}

.send-table th {
  height: 13px;
  border-top: none;
}

.send-table .alt {
  background-color: #efefef;
}

.send-table .sel {
  background-color: #bdbdbd;
}

.send-table input {
  display: block;
  width: 9px;
  height: 9px;
  margin: 0 auto;
  appearance: none;
  background-color: #f7f7f7;
  border: 1px solid #999;
  border-radius: 2px;
}

.send-btn {
  display: block;
  width: 22px;
  height: 13px;
  margin: 0 auto;
  background-color: #fafafa;
}

.send-btn::before {
  content: '';
  display: block;
  width: 9px;
  height: 9px;
  margin: 0 auto;
  background-color: #1170c4;
}

.w-mark { width: 10px; }
.w-row { width: 24px; }
.w-send { width: 26px; }
.w-trig { width: 44px; }
.w-name { width: 37px; }
.w-id { width: 45px; }
.w-chn { width: 17px; }
.w-type { width: 43px; }
.w-dlc { width: 21px; }
.w-brs { width: 21px; }
.w-note { width: 38px; }

/* signal panel */
.signal {
  flex: 1;
  display: flex;
  flex-direction: column;
  padding: 0 0 4px 5px;
}

.signal-head {
  height: 14px;
  display: flex;
  align-items: center;
  gap: 3px;
  padding-left: 2px;
  background-color: #f3f3f3;
}

.signal-head svg {
  width: 11px;
  height: 9px;
  color: #1170c4;
}

.signal-box {
  flex: 1;
  border: 1px solid #aaa;
}

.signal-row {
  height: 14px;
  display: flex;
  align-items: center;
  gap: 12px;
  padding-left: 3px;
}

.signal-sel {
  height: 12px;
  background-color: #c0c0c0;
  border-left: 7px solid #efefef;
}

/* trace */
.trace {
  display: flex;
  flex-direction: column;
  margin-bottom: 1px;
  border-left-width: 2px;
  border-right: none;
  border-bottom: 12px solid #f0f0f0;
}

.trace .pane-title,
.trace .toolbar {
  flex: none;
}

.trace .close {
  right: -3px;
}

.trace .pane-title {
  overflow: hidden;
}

.filter-input {
  width: 135px;
  height: 13px;
  border: none;
  outline: none;
}

.tool.clear {
  margin: 0 1px;
  border: 1px solid #ddd;
}

.tool.clear svg {
  color: #d81e2c;
}

.trace-table {
  flex: 1;
  width: 100%;
  table-layout: fixed;
  border-collapse: collapse;
  white-space: nowrap;
  color: #666;
  line-height: 10px;
  text-align: center;
  font-family: "Liberation Mono", "Noto Sans CJK SC", monospace;
}

.trace-table th,
.trace-table td {
  height: 10px;
  padding: 0;
  font-weight: normal;
  border-right: 1px solid #f5f5f5;
}

.trace-table th {
  border-color: #e2e2e2;
}

.trace-table .rest td {
  height: auto;
}

.trace-table .lead {
  text-align: left;
  padding-left: 5px;
}

.trace-table .stamp {
  text-align: left;
  padding-left: 14px;
}

.trace-table .cjk {
  font-size: 9px;
}

.trace-table .byte {
  border: none;
}

.trace-table td.byte {
  color: #b5b5b5;
}

.trace-table svg {
  width: 8px;
  height: 8px;
  margin-right: 3px;
  vertical-align: -1px;
  color: #2f86d0;
}

.t-time { width: 80px; }
.t-count { width: 51px; }
.t-chn { width: 41px; }
.t-id { width: 58px; }
.t-rate { width: 28px; }
.t-name { width: 78px; }
.t-type { width: 43px; }
.t-dots { width: 21px; }
.t-dlc { width: 21px; }
.t-len { width: 48px; }
.t-brs { width: 22px; }
.t-esi { width: 21px; }
.t-byte { width: 14px; }

.vscroll {
  padding: 10px 3px 0;
  background-color: #f0f0f0;
}

.vscroll div {
  width: 4px;
  height: 80%;
  background-color: #8a8a8a;
}

/* floating windows */
.window {
  position: absolute;
  display: flex;
  flex-direction: column;
  background-color: #fff;
  border: 1px solid #b4b4b4;
}

.window .toolbar {
  height: 14px;
}

.window .pane-title {
  height: 15px;
}

.setup {
  left: 24px;
  top: 112px;
  width: 615px;
  height: 310px;
}

.canvas {
  position: relative;
  flex: 1;
  margin: 0 1px;
  border: 1px solid #aaa;
  overflow: hidden;
}

.wires {
  position: absolute;
  left: 0;
  top: 0;
  fill: none;
  stroke: #b5b5b5;
}

.node {
  position: absolute;
  width: 87px;
  height: 38px;
  display: flex;
  align-items: center;
  padding-left: 4px;
  background-color: #fff;
  border: 1px solid #b5b5b5;
  border-radius: 9px;
}

.node svg {
  width: 16px;
  height: 16px;
  color: #1170c4;
}

.node span {
  flex: 1;
  text-align: center;
  white-space: nowrap;
  line-height: 9px;
  color: #222;
}

.node.gone { background-color: #efefef; }
.node.green { background-color: #dbffea; }
.node.blue { background-color: #e2e6ff; }

.n-source { left: 8px; top: 143px; }
.n-msgs { left: 104px; top: 4px; }
.n-setup { left: 104px; top: 50px; }
.n-filter { left: 104px; top: 143px; }
.n-db { left: 104px; top: 236px; }
.n-log { left: 200px; top: 96px; }
.n-trace { left: 200px; top: 143px; }
.n-chart { left: 200px; top: 189px; }

.filter {
  left: 373px;
  top: 170px;
  width: 391px;
  height: 225px;
  border-color: #8da7d2;
}

.filter .pane-title {
  color: #444;
}

.mode-off {
  margin: 0 5px 0 4px;
}

.mode-on {
  margin: 0 3px 0 5px;
}

.switch {
  width: 45px;
  height: 13px;
  appearance: none;
  background: linear-gradient(90deg, #9d9d9d 24px, #fff 24px);
  border: 1px solid #888;
}

.channels {
  flex: 1;
  margin: 0 2px;
  padding: 0 0 0 2px;
  list-style: none;
  border: 1px solid #aaa;
  color: #222;
}

.channels li {
  height: 11px;
  display: flex;
  align-items: center;
}

.chn {
  display: flex;
  align-items: center;
  gap: 3px;
  padding-right: 2px;
}

.chn b {
  font-size: 5px;
  color: #1170c4;
}

.picked {
  background-color: #cce6fb;
}

.child {
  padding-left: 6px;
}

.child::before {
  content: '';
  width: 10px;
  height: 6px;
  margin-top: -6px;
  border: 1px dotted #aaa;
  border-width: 0 0 1px 1px;
}

.child input {
  width: 9px;
  height: 9px;
  appearance: none;
  border: 1px solid #1170c4;
  border-radius: 50%;
  background: radial-gradient(#1170c4 50%, #fff 60%);
}

.child svg {
  width: 10px;
  height: 8px;
  margin: 0 4px 0 2px;
}

.filter-status {
  position: relative;
  height: 16px;
  display: flex;
  align-items: center;
  background-color: #efefef;
  color: #222;
}

.other {
  width: 82px;
  display: flex;
  align-items: center;
  border-right: 1px solid #c2c2c2;
}

.other em {
  width: 7px;
  height: 1px;
  margin-left: 2px;
  background-color: #d81e2c;
}

.other span {
  flex: 1;
  text-align: center;
}

.msg {
  padding-left: 2px;
}

.grip {
  position: absolute;
  right: 0;
  bottom: 0;
  width: 8px;
  height: 8px;
  stroke: #999;
}

/* annotations */
.mark {
  position: absolute;
  border: 2px solid #e0303b;
}

.mark-trigger {
  left: 59px;
  top: 43px;
  width: 46px;
  height: 38px;
}

.mark-id {
  left: 140px;
  top: 45px;
  width: 63px;
  height: 34px;
}

.remark {
  position: absolute;
  left: 473px;
  top: 61px;
  margin: 0;
  font-family: "DejaVu Sans", "Noto Sans CJK SC", sans-serif;
  font-size: 13px;
  line-height: 17px;
  color: #e8303c;
  white-space: nowrap;
}

.arrows {
  position: absolute;
  left: 0;
  top: 0;
  fill: #ee1c25;
  pointer-events: none;
}

.hscroll {
  flex: none;
  height: 12px;
  padding: 4px 34px 0 11px;
  background-color: #f0f0f0;
}

.hscroll div {
  height: 4px;
  background-color: #8a8a8a;
}

/* workspace sheets */
.sheets {
  flex: none;
  height: 18px;
  display: flex;
  background-color: #e5e5e5;
  border-top: 2px solid #fafafa;
  border-bottom: 1px solid #c8c8c8;
}

.sheet {
  width: 60px;
  display: flex;
  align-items: center;
  justify-content: center;
  gap: 3px;
  background-color: #f8f8f8;
}

.sheet svg {
  width: 10px;
  height: 10px;
  color: #1170c4;
}

.add {
  width: 20px;
  background: linear-gradient(#2bbf85, #2bbf85) center / 9px 1px no-repeat, linear-gradient(#2bbf85, #2bbf85) center / 1px 9px no-repeat, #efefef;
}

/* status bar */
.statusbar {
  flex: none;
  height: 13px;
  display: flex;
  align-items: center;
  background-color: #f0f0f0;
  color: #222;
}

.statusbar div {
  display: flex;
  align-items: center;
  padding-left: 2px;
  border-right: 1px solid #c8c8c8;
}

.statusbar svg {
  width: 8px;
  height: 8px;
  color: #1170c4;
}

.statusbar span {
  flex: 1;
  text-align: center;
}

.st-link,
.st-time {
  width: 66px;
}

.st-log {
  width: 98px;
}

.statusbar .st-msg {
  gap: 2px;
  border: none;
}

/* taskbar */
.taskbar {
  flex: none;
  height: 27px;
  display: flex;
  align-items: center;
  background: linear-gradient(90deg, #d9deea 0, #d8dde9 15%, #d3e4ea 20%, #d8dce9 27%, #ead5e3 32%, #dcdae9 36%, #dbdcea 50%, #e0dbe7 60%, #d9dcea 72%);
}

.weather,
.tray {
  flex: 1;
  display: flex;
  align-items: center;
}

.weather {
  gap: 5px;
  padding-left: 13px;
}

.weather svg {
  width: 17px;
  height: 17px;
}

.dock {
  display: flex;
  align-items: center;
}

.start {
  display: flex;
  margin-right: 10px;
}

.start svg {
  width: 16px;
  height: 16px;
  color: #1a8fe0;
}

.search {
  width: 145px;
  height: 21px;
  display: flex;
  align-items: center;
  gap: 6px;
  margin-right: 1px;
  padding: 0 6px;
  background-color: #f3f4fa;
  border-radius: 11px;
}

.search svg {
  width: 11px;
  height: 11px;
}

.search .food {
  width: 26px;
  height: 16px;
}

.search input {
  flex: 1;
  min-width: 0;
  padding: 0;
  font-size: 9px;
  border: none;
  background: none;
  outline: none;
}

.search input::placeholder {
  color: #555;
}

.task {
  position: relative;
  width: 27px;
  height: 25px;
  margin-left: 2px;
  display: flex;
  align-items: center;
  justify-content: center;
  border-radius: 3px;
}

.task svg {
  width: 16px;
  height: 16px;
}

.task.run::after,
.task.front::after {
  content: '';
  position: absolute;
  bottom: 0;
  width: 4px;
  height: 1px;
  background-color: #999;
}

.task.edge {
  background-color: #fce4e8;
}

.task.edge::after {
  background-color: #d33;
}

.task.front {
  background-color: #f1f1f8;
}

.task.front::after {
  width: 10px;
  background-color: #4b93d1;
}

.tray {
  justify-content: flex-end;
  gap: 5px;
  padding-right: 12px;
}

.tray svg {
  width: 11px;
  height: 11px;
}

.tray-up {
  padding: 1px;
}

.ime {
  margin: 0 8px 0 4px;
  font-size: 10px;
}

.sogou {
  width: 11px;
  margin-right: 8px;
  text-align: center;
  font-size: 9px;
  font-weight: bold;
  color: #fff;
  background-color: #ee5a2e;
  border-radius: 2px;
}

.date {
  margin-left: 4px;
  text-align: right;
}

.badge {
  width: 11px;
  height: 11px;
  line-height: 11px;
  text-align: center;
  color: #fff;
  background-color: #0f7bd0;
  border-radius: 50%;
}
```
